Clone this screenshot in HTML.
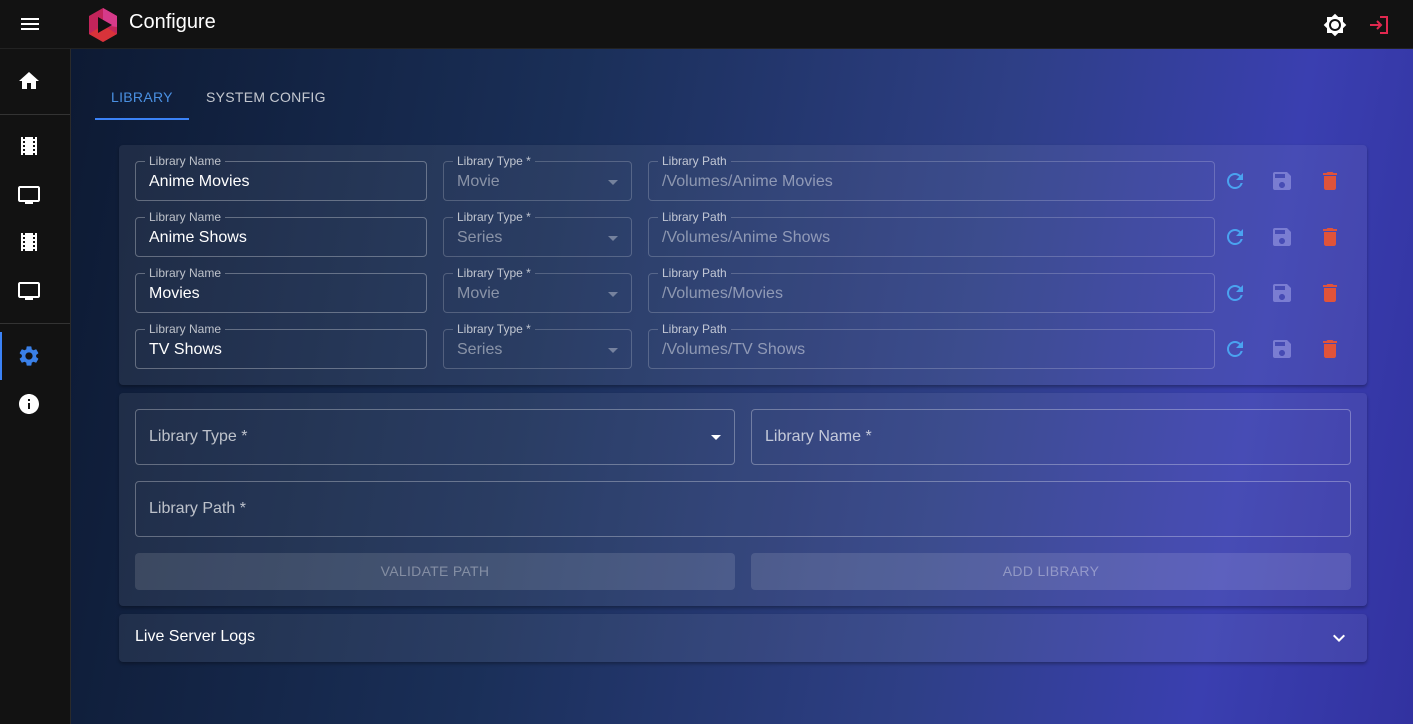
<!DOCTYPE html>
<html><head><style>
*{box-sizing:border-box;margin:0;padding:0}
body{width:1413px;height:724px;overflow:hidden;font-family:"Liberation Sans",sans-serif;background:#121212;position:relative;color:#fff}
.main{position:absolute;left:71px;top:49px;right:0;bottom:0;background:linear-gradient(100deg,#0d1a33 0%,#1a2f58 35%,#2e3f86 65%,#3a3fb0 85%,#3232a0 100%)}
.top{position:absolute;left:0;top:0;width:1413px;height:49px;background:#121212;border-bottom:1px solid #222}
.side{position:absolute;left:0;top:49px;width:71px;bottom:0;background:#121212;border-right:1px solid #2a2a2a}
.hr{position:absolute;left:0;width:70px;height:1px;background:#333}
.ic{position:absolute}
.paper{position:absolute;background:rgba(255,255,255,0.07);border-radius:4px;box-shadow:0 2px 3px rgba(0,0,0,.3)}
fieldset.f{position:absolute;border:1px solid rgba(255,255,255,.3);border-radius:4px;height:47px;padding:0 8px;margin:0}
fieldset.f legend{font-size:12px;color:rgba(255,255,255,.7);padding:0 4px;margin-left:1px;line-height:14px;height:14px}
.f .v{position:absolute;left:13px;top:5px;font-size:16px}
.dis .v{color:rgba(255,255,255,.45)}
.b{position:absolute;border:1px solid rgba(255,255,255,.3);border-radius:4px;height:56px}
.b .v{position:absolute;left:13px;top:18px;font-size:16px;color:rgba(255,255,255,.7)}
.btn{position:absolute;height:37px;background:rgba(255,255,255,.12);border-radius:4px;font-size:14px;color:rgba(255,255,255,.35);text-align:center;line-height:37px;letter-spacing:.3px}
</style></head><body>
<div class="main"></div>
<div class="top">
<svg class="ic" style="left:20px;top:16px" width="20" height="16"><path d="M1 3h18M1 8h18M1 13h18" stroke="#fff" stroke-width="2"/></svg>
<svg class="ic" style="left:85px;top:7px" width="36" height="36" viewBox="0 0 36 36"><polygon points="18,1 32,9 32,27 18,35 4,27 4,9" fill="#c2245a"/><polygon points="18,1 32,9 32,20 18,18" fill="#d63a8a"/><polygon points="4,27 18,35 32,27 18,18" fill="#d8333a"/><polygon points="13,10 27,18 13,26" fill="#111"/></svg>
<div style="position:absolute;left:129px;top:11px;font-size:20px">Configure</div>
<svg class="ic" style="left:1323px;top:13px" width="24" height="24" viewBox="0 0 24 24"><path fill="#fff" d="M20 8.69V4h-4.69L12 .69 8.69 4H4v4.69L.69 12 4 15.31V20h4.69L12 23.31 15.31 20H20v-4.690L23.31 12 20 8.69zM12 18c-3.310 0-6-2.69-6-6s2.69-6 6-6 6 2.69 6 6-2.69 6-6 6zm0-10c-2.21 0-4 1.79-4 4s1.79 4 4 4 4-1.79 4-4-1.79-4-4-4z"/></svg>
<svg class="ic" style="left:1368px;top:14px" width="22" height="22" viewBox="0 0 22 22"><path d="M2 11h11M9 7l4 4-4 4M12 3h7v16h-7" stroke="#e0284f" stroke-width="2" fill="none"/></svg>
</div>
<div class="side">
<svg class="ic" style="left:17px;top:20px" width="24" height="24" viewBox="0 0 24 24"><path fill="#fff" d="M10 20v-6h4v6h5v-8h3L12 3 2 12h3v8z"/></svg>
<div class="hr" style="top:65px"></div>
<svg class="ic" style="left:17px;top:85px" width="24" height="24" viewBox="0 0 24 24"><path fill="#fff" d="M18 3v2h-2V3H8v2H6V3H4v18h2v-2h2v2h8v-2h2v2h2V3h-2zM8 17H6v-2h2v2zm0-4H6v-2h2v2zm0-4H6V7h2v2zm10 8h-2v-2h2v2zm0-4h-2v-2h2v2zm0-4h-2V7h2v2z"/></svg>
<svg class="ic" style="left:17px;top:134px" width="24" height="24" viewBox="0 0 24 24"><path fill="#fff" d="M21 3H3c-1.1 0-2 .9-2 2v12c0 1.1.9 2 2 2h5v2h8v-2h5c1.1 0 2-.9 2-2V5c0-1.1-.9-2-2-2zm0 14H3V5h18v12z"/></svg>
<svg class="ic" style="left:17px;top:181px" width="24" height="24" viewBox="0 0 24 24"><path fill="#fff" d="M18 3v2h-2V3H8v2H6V3H4v18h2v-2h2v2h8v-2h2v2h2V3h-2zM8 17H6v-2h2v2zm0-4H6v-2h2v2zm0-4H6V7h2v2zm10 8h-2v-2h2v2zm0-4h-2v-2h2v2zm0-4h-2V7h2v2z"/></svg>
<svg class="ic" style="left:17px;top:230px" width="24" height="24" viewBox="0 0 24 24"><path fill="#fff" d="M21 3H3c-1.1 0-2 .9-2 2v12c0 1.1.9 2 2 2h5v2h8v-2h5c1.1 0 2-.9 2-2V5c0-1.1-.9-2-2-2zm0 14H3V5h18v12z"/></svg>
<div class="hr" style="top:274px"></div>
<div style="position:absolute;left:0;top:283px;width:2px;height:48px;background:#3b82f6"></div>
<svg class="ic" style="left:17px;top:295px" width="24" height="24" viewBox="0 0 24 24"><path fill="#3a80e8" d="M19.14 12.94c.04-.3.06-.61.06-.94 0-.32-.02-.64-.07-.94l2.03-1.58a.49.49 0 00.12-.61l-1.92-3.32a.488.488 0 00-.59-.22l-2.39.96c-.5-.38-1.03-.7-1.62-.94l-.36-2.54a.484.484 0 00-.48-.41h-3.84c-.24 0-.43.17-.47.41l-.36 2.54c-.59.24-1.13.57-1.62.94l-2.39-.96c-.22-.08-.47 0-.59.22L2.74 8.870c-.12.21-.08.47.12.61l2.03 1.58c-.05.3-.09.63-.09.94s.02.64.07.94l-2.03 1.58a.49.49 0 00-.12.61l1.92 3.32c.12.22.37.29.59.22l2.39-.96c.5.38 1.03.7 1.62.94l.36 2.54c.05.24.24.41.48.41h3.84c.24 0 .44-.17.47-.41l.36-2.54c.59-.24 1.13-.56 1.62-.94l2.39.96c.22.08.47 0 .59-.22l1.92-3.32c.12-.22.07-.47-.12-.61l-2.010-1.58zM12 15.6c-1.98 0-3.6-1.62-3.6-3.6s1.62-3.6 3.6-3.6 3.6 1.62 3.6 3.6-1.62 3.6-3.6 3.6z"/></svg>
<svg class="ic" style="left:17px;top:343px" width="24" height="24" viewBox="0 0 24 24"><path fill="#fff" d="M12 2C6.48 2 2 6.48 2 12s4.48 10 10 10 10-4.48 10-10S17.52 2 12 2zm1 15h-2v-6h2v6zm0-8h-2V7h2v2z"/></svg>
</div>
<div style="position:absolute;left:111px;top:89px;font-size:14px;color:#4a90e2;letter-spacing:.3px">LIBRARY</div>
<div style="position:absolute;left:95px;top:118px;width:94px;height:2px;background:#3b82f6"></div>
<div style="position:absolute;left:206px;top:89px;font-size:14px;color:rgba(255,255,255,.75);letter-spacing:.3px">SYSTEM CONFIG</div>

<div class="paper" style="left:119px;top:145px;width:1248px;height:240px"></div>
<div class="paper" style="left:119px;top:393px;width:1248px;height:213px"></div>
<div class="paper" style="left:119px;top:614px;width:1248px;height:48px"></div>

<div id="rows"></div>
<script>
var d=[["Anime Movies","Movie","/Volumes/Anime Movies"],["Anime Shows","Series","/Volumes/Anime Shows"],["Movies","Movie","/Volumes/Movies"],["TV Shows","Series","/Volumes/TV Shows"]];
var h="";
d.forEach(function(r,i){var y=161+i*56-7;
h+='<fieldset class="f" style="left:135px;top:'+y+'px;width:292px"><legend>Library Name</legend><span class="v">'+r[0]+'</span></fieldset>';
h+='<fieldset class="f dis" style="left:443px;top:'+y+'px;width:189px;border-color:rgba(255,255,255,.2)"><legend>Library Type *</legend><span class="v">'+r[1]+'</span><svg style="position:absolute;left:164px;top:12px" width="10" height="5"><path d="M0 0h10L5 5z" fill="rgba(255,255,255,.35)"/></svg></fieldset>';
h+='<fieldset class="f dis" style="left:648px;top:'+y+'px;width:567px;border-color:rgba(255,255,255,.2)"><legend>Library Path</legend><span class="v">'+r[2]+'</span></fieldset>';
var yi=y+15;
h+='<svg class="ic" style="left:1223px;top:'+yi+'px" width="24" height="24" viewBox="0 0 24 24"><path fill="#4aa3f0" d="M17.65 6.35A7.958 7.958 0 0012 4c-4.42 0-7.99 3.58-7.99 8s3.57 8 7.990 8c3.73 0 6.84-2.55 7.73-6h-2.08A5.99 5.99 0 0112 18c-3.31 0-6-2.69-6-6s2.69-6 6-6c1.66 0 3.14.69 4.22 1.78L13 11h7V4l-2.35 2.35z"/></svg>';
h+='<svg class="ic" style="left:1270px;top:'+yi+'px" width="24" height="24" viewBox="0 0 24 24"><path fill="rgba(200,200,255,.4)" d="M17 3H5a2 2 0 00-2 2v14a2 2 0 002 2h14c1.1 0 2-.9 2-2V7l-4-4zm-5 16c-1.66 0-3-1.34-3-3s1.34-3 3-3 3 1.34 3 3-1.34 3-3 3zm3-10H5V5h10v4z"/></svg>';
h+='<svg class="ic" style="left:1318px;top:'+yi+'px" width="24" height="24" viewBox="0 0 24 24"><path fill="#e0533a" d="M6 19c0 1.1.9 2 2 2h8c1.1 0 2-.9 2-2V7H6v12zM19 4h-3.5l-1-1h-5l-1 1H5v2h14V4z"/></svg>';
});
document.getElementById("rows").innerHTML=h;
</script>

<div class="b" style="left:135px;top:409px;width:600px"><span class="v">Library Type *</span><svg style="position:absolute;left:575px;top:25px" width="10" height="5"><path d="M0 0h10L5 5z" fill="#fff"/></svg></div>
<div class="b" style="left:751px;top:409px;width:600px"><span class="v">Library Name *</span></div>
<div class="b" style="left:135px;top:481px;width:1216px"><span class="v">Library Path *</span></div>
<div class="btn" style="left:135px;top:553px;width:600px">VALIDATE PATH</div>
<div class="btn" style="left:751px;top:553px;width:600px">ADD LIBRARY</div>
<div style="position:absolute;left:135px;top:628px;font-size:16px">Live Server Logs</div>
<svg class="ic" style="left:1327px;top:626px" width="24" height="24" viewBox="0 0 24 24"><path fill="#fff" d="M16.59 8.59L12 13.17 7.41 8.59 6 10l6 6 6-6z"/></svg>
</body></html>
